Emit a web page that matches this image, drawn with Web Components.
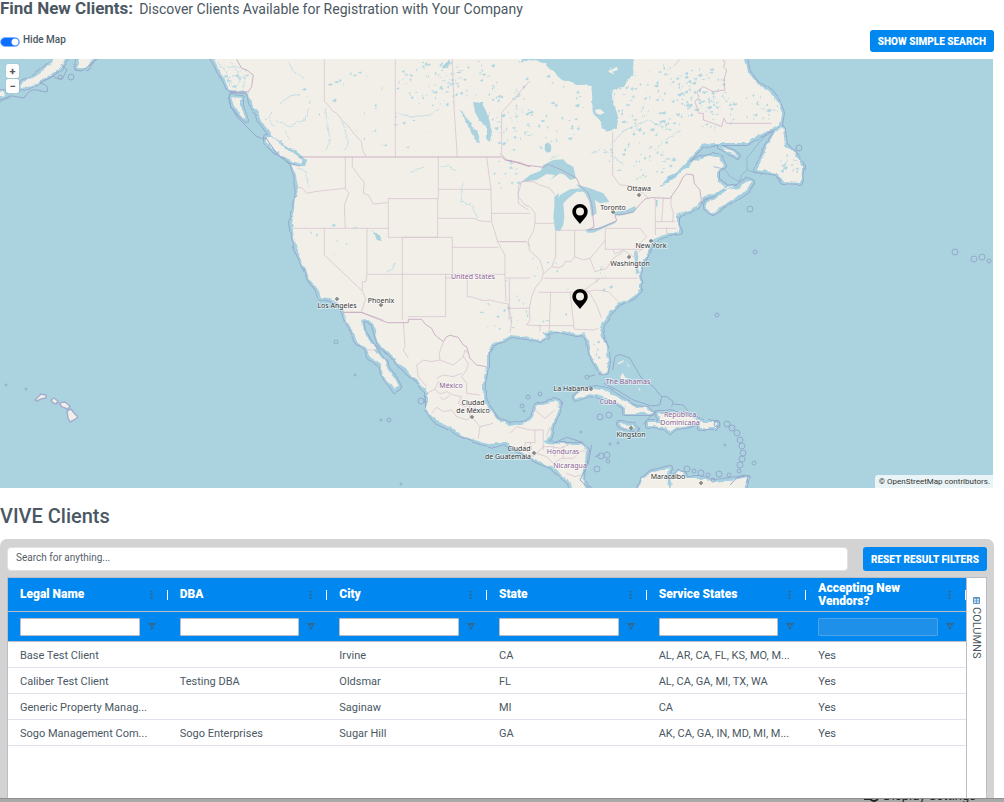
<!DOCTYPE html>
<html lang="en">
<head>
<meta charset="utf-8">
<meta name="viewport" content="width=device-width, initial-scale=1">
<title>Find New Clients</title>
<style>
  body {
    margin: 0;
    background: #fff;
    color: #4b5863;
    font-family: Roboto, "Liberation Sans", sans-serif;
    font-size: 12px;
  }
</style>
</head>
<body>
<client-page></client-page>

<template id="tpl-map">
  <style>
    :host { display: block; position: relative; background: #aad3df; }
    svg { display: block; width: 100%; height: auto; }
    text { font: 7px "Noto Sans", sans-serif; text-anchor: middle; paint-order: stroke; stroke: #fff; stroke-opacity: .6; stroke-width: 1.5px; fill: #333; }
    .country { fill: #8b5f92; }
    .zoom { position: absolute; left: 6px; top: 5px; display: grid; gap: 1px; }
    .zoom button { width: 13px; height: 14px; padding: 0; border: 0; border-radius: 2px; background: #fff; color: #555; font: bold 11px/13px Roboto, sans-serif; box-shadow: 0 0 1px #789; }
    .credit { position: absolute; right: 0; bottom: 0; padding: 1px 3px 1px 4px; background: rgba(255, 255, 255, .75); border-radius: 3px 0 0 0; color: #333; font-size: 8px; line-height: 11px; }
    .credit a { color: inherit; text-decoration: none; }
  </style>
  <svg viewBox="0 59 993 429" role="img" aria-label="Client locations">
    <defs>
      <filter id="rough" x="0" y="50" width="1000" height="450" filterUnits="userSpaceOnUse">
        <feTurbulence type="fractalNoise" baseFrequency=".12" numOctaves="3" seed="4"/>
        <feDisplacementMap in="SourceGraphic" scale="5" xChannelSelector="R" yChannelSelector="G"/>
      </filter>
      <filter id="rough-edge" x="0" y="50" width="1000" height="450" filterUnits="userSpaceOnUse">
        <feTurbulence type="fractalNoise" baseFrequency=".06" numOctaves="2" seed="4"/>
        <feDisplacementMap in="SourceGraphic" scale="4" xChannelSelector="R" yChannelSelector="G"/>
      </filter>
      <filter id="rough-line" x="0" y="50" width="1000" height="450" filterUnits="userSpaceOnUse">
        <feTurbulence type="fractalNoise" baseFrequency=".2" numOctaves="2" seed="9"/>
        <feDisplacementMap in="SourceGraphic" scale="4" xChannelSelector="R" yChannelSelector="G"/>
      </filter>
      <g id="land">
        <path d="M205 50L213 59 219 70 225 80 229 90 245 91 249 93 251 103 258 112 262 123 268 131 272 137 284 143 293 150 302 155 306 160 304 166 298 166 291 163 295 175 297 187 295 210 292 223 294 237 295 247 300 258 305 268 310 280 317 288 320 297 328 298 337 302 342 308 348 323 354 333 358 344 366 347 370 357 380 365 382 375 390 383 395 390 399 387 395 378 388 370 385 362 378 353 372 345 367 338 363 330 361 320 367 319 373 324 377 337 380 345 390 353 398 363 408 372 418 380 427 392 427 410 435 420 450 427 462 435 480 442 493 445 505 442 513 447 523 453 540 462 553 467 563 477 570 483 573 498H592L583 480 582 473 585 463 586 450 580 444 563 444 543 443 550 437 552 427 555 417 560 403 555 401 537 405 533 417 527 423 510 426 497 420 488 407 483 397 483 383 486 367 486 353 493 345 503 340 510 335 527 337 540 341 547 337 543 332 563 331 577 334 583 333 588 340 590 353 595 363 600 372 606 373 608 363 607 350 602 337 600 328 602 323 610 312 620 303 633 297 640 290 640 280 638 277 642 263 648 250 653 242 657 237 673 233 680 232 677 225 677 215 687 212 698 205 703 197 717 193 725 186 717 180 717 170 724 166 720 158 713 155 700 158 687 167 675 178 660 187 668 177 677 172 690 158 702 145 713 143 747 143 760 135 773 128 780 125 782 113 777 100 767 90 757 83 748 72 743 50Z"/>
        <path d="M266 137L275 139 285 147 295 155 302 160 300 164 290 160 280 154 272 148 266 142ZM231 97L241 98 241 106 246 121 240 115 234 106Z"/>
        <path d="M23 82L33 78 47 67 60 55H69L60 68 50 75 37 83 28 88 20 87ZM77 68L80 55H96L86 68ZM-5 98L6 96 4 92-5 92Z"/>
        <path d="M705 208L713 213 730 202 747 190 752 182 747 180 738 188 727 190 717 198 707 202ZM719 185L725 188 733 187 726 190Z"/>
        <path d="M782 128L775 132 767 145 762 160 757 170 777 173 783 182 800 183 803 167 795 153 785 145 783 130ZM720 147L733 152 738 156 730 153Z"/>
        <path d="M574 396L582 390 597 388 610 392 623 400 633 407 647 408 652 413 625 413 625 408 617 402 603 397 590 394 575 399ZM657 413L667 413 687 415 700 421 690 425 677 427 670 432 665 427 648 426 648 423 663 423 660 417ZM700 423H717L715 428H700ZM620 424L633 425 637 429 623 428Z"/>
        <path d="M636 498L642 480 650 473 670 468 667 477 670 491 672 480 678 472 683 473 685 478 700 478 713 482 738 479 747 477 742 498Z"/>
      </g>
    </defs>
    <g filter="url(#rough-edge)">
      <use href="#land" fill="none" stroke="#9aaccd" stroke-width="6" stroke-linejoin="round"/>
      <use href="#land" fill="none" stroke="#a5d0df" stroke-width="4" stroke-linejoin="round"/>
    </g>
    <use href="#land" fill="#f2efe9" filter="url(#rough)"/>
    <g filter="url(#rough)">
      <path fill="#aad3df" transform="translate(500 50) scale(.3333)" d="M60 0L66 28 90 30 135 40 170 75 215 100 275 108 278 185 300 220 320 245 350 235 355 205 340 150 338 120 370 110 400 75 400 0Z"/>
    </g>
    <g fill="#aad3df" transform="translate(500 50) scale(.3333)">
      <path d="M65 395L90 375 122 362 130 345 160 330 190 328 200 340 220 350 228 385 210 390 195 375 180 370 150 390 165 375 140 372 110 390Z"/>
      <path d="M163 440L176 430 176 445 180 435 210 418 235 415 262 425 230 425 205 445 190 460 193 500 190 525 180 543 165 540 160 500 163 470Z"/>
      <path d="M228 403L270 415 310 430 328 455 300 460 285 450 290 490 275 500 268 455 255 430Z"/>
      <path d="M256 538L290 535 350 512 345 520 320 530 280 548 262 548ZM340 485L375 482 405 468 409 478 400 488 360 497 343 494Z"/>
      <path d="M135 282L145 277 154 290 152 305 142 308 134 300ZM402 605L410 600 415 620 412 650 420 670 408 672 405 640ZM455 570L490 555 515 552 490 562 460 576ZM468 450L473 450 472 472 468 468Z"/>
      <path fill="#f2efe9" d="M285 180L300 177 314 188 300 194 288 190ZM325 65L335 48 330 62 350 50 354 60 337 65 345 74Z"/>
    </g>
    <g filter="url(#rough-line)" fill="#aad3df">
      <path d="M473 102L482 103 487 113 492 130 490 142 487 140 487 128 478 120 475 110ZM459 109L466 116 472 125 477 133 480 143 476 142 472 132 466 122ZM449 59L442 68 446 68 452 62ZM373 231L379 235 382 241 377 240ZM523 59L519 62 526 61 530 58Z"/>
    </g>
    <path id="lakes" fill="#a8d4e1" opacity=".85"/>
    <path id="rivers" filter="url(#rough-line)" fill="none" stroke="#b3d8e2" stroke-width=".7" d="M288 62L294 72 304 78M280 104L290 96 300 94M275 120L290 126 305 119 309 108M325 108L330 140 326 150M342 120L348 140 345 150M409 172L420 168 424 166M440 167L448 166 456 171M463 182L461 202 470 204 478 218M230 62L237 70 240 80 235 88M232 75L245 78 243 91M395 112L410 117 430 115 440 108M610 145L625 130 648 120 670 130M590 155L602 148 624 165M655 150L665 140 680 130M560 155L550 160M386 273L392 268 395 263M290 140L285 132M275 128L270 118M265 120L272 113M297 168L306 172 308 186M217 62L226 72 230 86M224 66L240 68"/>
    <g fill="none" stroke="#d2bccb" stroke-width="2" transform="translate(200 50) scale(.3333)">
      <path d="M373 28V155L385 165 395 180 410 190 430 215 440 222 465 255 480 270 485 275 487 298 498 320M586 28V321M757 28L763 185 772 321M990 92L905 188V310M288 410L308 415 320 430 350 424 390 420 436 415M436 321V415L447 430 433 465 436 535M280 535H565M457 321V350L475 375 493 398 490 430 505 435 520 462 562 458M565 446H713V562H565ZM715 321V446M715 418H873M715 505H820L840 513 872 515M860 321L873 418 875 515 895 580 915 615M875 490H990M890 575H980L990 590M757 592H895M607 562H757V673H607ZM501 535V673H607V810M373 535V615L487 723M501 673L498 695 487 695 487 723 497 745 485 785M432 787H485L550 810M757 673H915M915 615V684L918 755M737 673V800H625M737 684H802V740L820 742 850 752 870 750 900 758 925 762 928 810M918 684H990M990 390L965 395 955 430 955 460 985 480"/>
      <path stroke="#b993b5" d="M300 321H905L915 330 950 338 990 350M110 28L125 55 140 60 160 75 155 110 145 125 90 128"/>
    </g>
    <g fill="none" stroke="#d2bccb" stroke-width="2" transform="translate(500 50) scale(.3333)">
      <path d="M338 245V375L360 405 390 407 430 430 445 445M105 520H163M167 541H258M65 395L100 395 120 405 150 415 165 435M65 395L55 410 55 440 75 465 90 470 105 490 105 520 100 545 85 570 88 600 120 630 130 665M167 541V620L155 650M224 541V620M130 672L155 650 175 653 190 648 195 635 212 635 224 620 250 630 270 625 300 590 316 570M316 535V598H430L420 580 440 560 420 535H316M466 445V515L525 515M466 515V555M490 445L488 475 485 515M515 440L512 460 520 490 518 515M500 535V552M466 535H530M340 600L345 612 370 600 400 620 425 598M270 625L285 665 320 655 340 625 370 605M130 685H412M115 727H245L300 685M245 727L290 720 325 725 355 755M130 665L125 690 105 715 95 740 88 775 90 810 80 825 120 827 120 845M152 727L148 840M210 727L222 830M115 827H218L225 838 280 840 295 835M245 715L270 730 290 765 305 805M30 775H90M28 685V775L35 815 30 850M0 575H80M540 28L520 50"/>
      <path stroke="#c7a9c1" d="M670 28L675 40 670 50 680 60 672 90 675 120 640 125 610 110 590 125 597 140 585 155 597 190 610 190 610 210 640 220 665 230 672 205 680 220H815"/>
      <path stroke="#b993b5" d="M0 310L20 330 60 338 80 346 100 348 130 352 145 343 185 360 230 385 240 408 265 430 275 460 282 530 265 540 300 535 350 512 345 495 375 492 400 485 435 447 455 443 510 445 535 410 550 380 560 372 580 375 583 400 600 420 605 460"/>
      <path stroke="#8eabc7" d="M815 237L780 275 740 325 742 360 725 375 718 395 690 380 675 358 640 350M742 360L770 370"/>
    </g>
    <g fill="none" stroke="#d2bccb" stroke-width="2" transform="translate(280 250) scale(.3333)">
      <path d="M370 218L375 290 370 300 385 325M490 275L478 310 480 330 455 335 430 330 410 345 415 380 440 410M480 330L520 345 550 320 555 300 565 310M550 320L565 340 560 360 545 380 560 400 560 430 600 435M440 430L465 418 480 432 500 425 520 435 545 440 535 460 555 470 580 460 590 480 610 485M455 490L470 472 490 485 515 480 530 500 560 510 575 500 600 530 595 565M470 385L490 375 520 380 545 370M465 418L475 395 500 405M510 435L490 450 480 440M570 460L570 500M262 300H290M765 480L795 505 825 480M760 480L765 465M600 530L640 520M690 550L710 530 750 540H790V575M765 540V578L735 578 735 600M770 610L790 590 815 590 840 595 870 582M820 640L845 625 880 625 900 605 918 600M860 670L885 680 905 675M735 600L760 620 770 610 800 620 820 640M750 578L755 600M790 578V600M810 530L800 560M820 590L825 620M850 590V625"/>
      <path stroke="#b993b5" d="M190 187H243L322 218H385V208H425L435 222 455 235 465 255 490 275 500 260 510 256 535 262 550 285 560 290 570 325 590 345 620 350"/>
    </g>
    <g fill="none" stroke="#95a9ca" stroke-width="3" transform="translate(500 250) scale(.3333)">
      <path d="M338 360L345 320 360 313 390 325 410 360 425 385 460 410 485 440 480 465 455 468 400 450 350 420 312 400M485 440L500 440 520 455 515 470M520 462L550 465 565 485M430 523L445 505 470 485M160 580L200 562 250 578M265 380L285 375M272 720L240 690 265 640 275 585M285 620L300 615M690 705L710 684 745 676 740 700"/>
      <path fill="#f2efe9" stroke="none" d="M361 380L368 368 375 382 385 386 365 388ZM352 340L370 331 372 334 356 343ZM380 338L388 348 386 352ZM415 412L422 420 418 422Z"/>
    </g>
    <path id="rings" fill="none" stroke="#95a9ca"/>
    <g fill="none" stroke="#95a9ca">
      <path d="M0 102Q8 95 13 96T24 98Q30 88 37 90T47 92Q50 85 40 83L53 76Q62 82 63 78T67 70L61 64M74 68Q80 74 86 68L97 59M231 92Q227 98 231 107T245 125L256 136Q262 140 266 138M266 138L277 154 288 163 300 166"/>
      <path fill="#f2efe9" stroke="#a3afd0" stroke-width="1.5" stroke-linejoin="round" d="M35 400L38 397 41 394 46 395 46 398 41 399 37 401ZM51 400L54 398 58 401 56 404 53 403ZM59 403L65 402 70 406 68 409 62 407ZM67 411L71 409 74 413 78 417 74 420 70 422 68 418Z"/>
    </g>
    <g id="labels"></g>
  </svg>
  <div class="zoom"><button type="button" aria-label="Zoom in">+</button><button type="button" aria-label="Zoom out">−</button></div>
  <div class="credit">© <a href="#osm">OpenStreetMap</a> contributors.</div>
  <slot></slot>
</template>

<script>
class ActionButton extends HTMLElement {
  constructor() {
    super();
    this.attachShadow({ mode: "open" });
    this.shadowRoot.innerHTML = `
      <style>
        :host { display: inline-block; }
        button {
          height: var(--button-height, 22px);
          padding: 2px 8px 0;
          border: 0;
          border-radius: 3px;
          background: #0087f0;
          color: #fff;
          font: 900 10px/20px Roboto, sans-serif;
          white-space: nowrap;
          width: 100%;
        }
      </style>
      <button type="button"><slot></slot></button>
    `;
  }
}
customElements.define("action-button", ActionButton);

class ToggleSwitch extends HTMLElement {
  constructor() {
    super();
    this.attachShadow({ mode: "open" });
    this.shadowRoot.innerHTML = `
      <style>
        :host { display: block; font-size: 10px; font-weight: 500; line-height: 14px; }
        label { display: flex; gap: 3px; }
        input {
          appearance: none;
          width: 20px;
          height: 10px;
          margin: 4px 0 0;
          border: 1px solid #86b7fe;
          border-radius: 5px;
          background: radial-gradient(circle at 14px 4px, #fff 3px, #0d6efd 4px);
        }
      </style>
      <label><input type="checkbox" role="switch" checked><slot></slot></label>
    `;
  }
}
customElements.define("toggle-switch", ToggleSwitch);

class MapPin extends HTMLElement {
  constructor() {
    super();
    this.attachShadow({ mode: "open" });
    this.shadowRoot.innerHTML = `
      <style>
        :host { display: block; position: absolute; transform: translate(-50%, -100%); }
        svg { display: block; }
      </style>
      <svg width="16" height="20" viewBox="0 0 16 20"><path fill-rule="evenodd" d="M8 0a7.7 7.7 0 0 1 7.7 7.7C15.7 12 11 16 8 20 5 16 .3 12 .3 7.7A7.7 7.7 0 0 1 8 0zm0 3.6a4 4 0 1 0 0 8 4 4 0 0 0 0-8z"/></svg>
    `;
  }

  connectedCallback() {
    this.style.left = this.getAttribute("x") + "%";
    this.style.top = this.getAttribute("y") + "%";
  }
}
customElements.define("map-pin", MapPin);

// x, baseline y, text, is country
const LABELS = [
  [639, 191, "Ottawa"], [613, 210, "Toronto"], [651, 248, "New York"],
  [630, 266, "Washington"], [337, 308, "Los Angeles"], [381, 303, "Phoenix"],
  [571, 391, "La Habana"], [473, 405, "Ciudad"], [473, 413, "de México"],
  [519, 451, "Ciudad"], [508, 459, "de Guatemala"], [631, 437, "Kingston"],
  [668, 479, "Maracaibo"],
  [473, 279, "United States", 1], [451, 388, "México", 1], [628, 384, "The Bahamas", 1],
  [608, 404, "Cuba", 1], [680, 417, "República", 1], [680, 425, "Dominicana", 1],
  [563, 454, "Honduras", 1], [570, 468, "Nicaragua", 1],
];

const TOWNS = [[639, 195], [613, 212], [651, 241], [629, 257], [337, 299], [381, 305],
  [591, 389], [472, 417], [534, 453], [631, 428], [701, 483]];

// centre x, centre y, spread x, spread y, count
const LAKE_FIELDS = [
  [430, 85, 35, 24, 75], [475, 80, 28, 20, 25], [508, 120, 22, 32, 50], [545, 110, 38, 40, 50],
  [655, 100, 42, 38, 100], [700, 92, 26, 24, 60], [640, 155, 40, 25, 45], [715, 110, 20, 22, 40],
  [345, 95, 45, 30, 16], [385, 125, 50, 25, 14], [505, 175, 14, 16, 14], [330, 235, 30, 20, 8],
  [760, 107, 18, 16, 25], [790, 165, 12, 12, 20], [235, 76, 12, 12, 18], [540, 290, 40, 35, 16],
  [500, 315, 22, 16, 14], [607, 280, 24, 15, 10], [595, 350, 4, 12, 8],
];

// centre x, centre y, radius
const RINGS = [
  [6, 385, 1], [26, 389, 1], [336, 342, 2], [355, 375, 1], [381, 420, 1], [389, 420, 2], [421, 401, 3],
  [401, 484, 1], [750, 209, 3], [717, 315, 2], [755, 252, 2], [955, 252, 3], [974, 259, 3], [982, 257, 3],
  [989, 261, 2], [528, 397, 2], [540, 394, 2], [522, 406, 2], [524, 411, 1], [600, 417, 3], [609, 415, 3],
  [581, 432, 1], [610, 444, 1], [618, 443, 1], [601, 456, 3], [607, 455, 3], [608, 461, 2], [597, 469, 3],
  [587, 377, 2], [725, 445, 1], [754, 463, 2], [717, 424, 3], [727, 424, 3], [732, 428, 3], [737, 433, 3],
  [740, 440, 3], [742, 446, 3], [743, 453, 3], [742, 459, 3], [740, 465, 3], [739, 471, 2], [687, 469, 3],
  [694, 471, 2], [701, 473, 3], [708, 475, 2], [719, 474, 3], [729, 475, 2], [60, 77, 2], [71, 77, 3],
  [799, 148, 3], [713, 480, 2],
];

class ClientMap extends HTMLElement {
  constructor() {
    super();
    this.attachShadow({ mode: "open" });
    this.shadowRoot.append(document.getElementById("tpl-map").content.cloneNode(true));
    this.drawLakes();
    this.drawRings();
    this.drawLabels();
  }

  // fixed seed, so the lakes stay where they are between loads
  drawLakes() {
    let seed = 17;
    const rnd = () => (seed = (seed * 16807) % 2147483647) / 2147483647;
    let d = "";
    LAKE_FIELDS.forEach(([cx, cy, rx, ry, count]) => {
      for (let i = 0; i < count; i++) {
        const angle = rnd() * Math.PI * 2;
        const dist = Math.sqrt(rnd());
        const x = cx + Math.cos(angle) * dist * rx;
        const y = Math.max(60, cy + Math.sin(angle) * dist * ry);
        const w = 0.6 + rnd() * rnd() * 5;
        const h = 0.4 + rnd() * 1.6;
        d += `M${x.toFixed(1)} ${y.toFixed(1)}l${w.toFixed(1)} ${(-h).toFixed(1)} ${(w / 4).toFixed(1)} ${h.toFixed(1)} ${(-w / 2).toFixed(1)} ${h.toFixed(1)}z`;
      }
    });
    this.shadowRoot.querySelector("#lakes").setAttribute("d", d);
  }

  drawRings() {
    const d = RINGS.map(([x, y, r]) => `M${x - r} ${y}a${r} ${r} 0 1 0 ${r * 2} 0a${r} ${r} 0 1 0 ${-r * 2} 0`).join("");
    this.shadowRoot.querySelector("#rings").setAttribute("d", d);
  }

  drawLabels() {
    const towns = TOWNS.map(([x, y]) => `<circle cx="${x}" cy="${y}" r="1.3" fill="#bbb" stroke="#555" stroke-width=".8"/>`);
    const names = LABELS.map(([x, y, name, country]) => `<text x="${x}" y="${y}"${country ? ' class="country"' : ""}>${name}</text>`);
    this.shadowRoot.querySelector("#labels").innerHTML = towns.concat(names).join("");
  }
}
customElements.define("client-map", ClientMap);

const COLUMNS = ["Legal Name", "DBA", "City", "State", "Service States", "Accepting New Vendors?"];
const CLIENTS = [
  ["Base Test Client", "", "Irvine", "CA", "AL, AR, CA, FL, KS, MO, M...", "Yes"],
  ["Caliber Test Client", "Testing DBA", "Oldsmar", "FL", "AL, CA, GA, MI, TX, WA", "Yes"],
  ["Generic Property Manag...", "", "Saginaw", "MI", "CA", "Yes"],
  ["Sogo Management Com...", "Sogo Enterprises", "Sugar Hill", "GA", "AK, CA, GA, IN, MD, MI, M...", "Yes"],
];

class ClientGrid extends HTMLElement {
  constructor() {
    super();
    this.attachShadow({ mode: "open" });
    this.shadowRoot.innerHTML = `
      <style>
        :host { display: flex; border: 1px solid #babfc7; border-bottom: 0; background: #fff; }
        .main { flex: 1; min-width: 0; }
        table { width: 100%; table-layout: fixed; border-collapse: collapse; }
        th, td { padding: 0 0 0 12px; text-align: left; white-space: nowrap; }
        thead { background: #0087f0; }
        th { border-bottom: 1px solid #babfc7; }
        .cell { display: flex; align-items: center; }
        .names .cell { height: 33px; }
        .filters .cell { height: 29px; }
        .name { flex: 1; color: #fff; font-size: 12px; font-weight: 900; line-height: 13px; white-space: normal; }
        .cell svg { display: block; }
        .menu { width: 5px; margin-right: 13px; }
        .bar { width: 1px; height: 10px; background: #fff; }
        input { flex: 1; min-width: 0; box-sizing: border-box; height: 18px; padding: 0 4px; border: 1px solid #babfc7; border-radius: 1px; background: #fff; font: inherit; }
        input:disabled { background: #1f90ea; border-color: #4ba3ea; }
        .funnel { margin: 0 12px 0 8px; }
        button { padding: 0; border: 0; background: none; color: inherit; font: inherit; }
        td { height: 24px; padding-top: 1px; border-bottom: 1px solid #dde2eb; font-size: 11px; overflow: hidden; text-overflow: ellipsis; }
        .side { width: 19px; border-left: 1px solid #babfc7; }
        .side button { display: flex; align-items: center; gap: 3px; width: 19px; padding-top: 19px; writing-mode: vertical-rl; font-size: 11px; line-height: 19px; }
      </style>
      <div class="main">
        <table>
          <thead>
            <tr class="names">${COLUMNS.map((name) => this.headCell(name)).join("")}</tr>
            <tr class="filters">${COLUMNS.map((name, i) => this.filterCell(name, i === 5)).join("")}</tr>
          </thead>
          <tbody>
            ${CLIENTS.map((row) => `<tr>${row.map((text) => `<td>${text}</td>`).join("")}</tr>`).join("")}
          </tbody>
        </table>
      </div>
      <div class="side">
        <button type="button">
          <svg width="7" height="7" viewBox="0 0 7 7"><path fill="#cfe4f7" stroke="#3c7fb5" stroke-width=".8" d="M.5.5h6v6h-6z"/><path stroke="#3c7fb5" stroke-width=".6" d="M.5 1.5h6M.5 4h6M3.5 1v5.500"/></svg>
          <span>COLUMNS</span>
        </button>
      </div>
    `;
  }

  headCell(name) {
    return `<th scope="col"><div class="cell">
      <span class="name">${name}</span>
      <button type="button" class="menu" aria-label="${name} menu"><svg width="5" height="9" viewBox="0 0 5 9" fill="#44606f"><path d="M1.500 1h2v1.500h-2zM1.500 4h2v1.500h-2zM1.500 7h2v1.500h-2z"/></svg></button>
      <span class="bar"></span>
    </div></th>`;
  }

  filterCell(name, disabled) {
    return `<th><div class="cell">
      <input type="text" aria-label="${name} filter"${disabled ? " disabled" : ""}>
      <button type="button" class="funnel" aria-label="${name} filter options"><svg width="8" height="7" viewBox="0 0 8 7" fill="none" stroke="#44606f" stroke-width=".8"><path d="M.7.5h6.600L4.800 3.700V5.300L3.300 6.400V3.700zM1.500 1.500h5"/></svg></button>
    </div></th>`;
  }
}
customElements.define("client-grid", ClientGrid);

class ClientPage extends HTMLElement {
  constructor() {
    super();
    this.attachShadow({ mode: "open" });
    this.shadowRoot.innerHTML = `
      <style>
        :host { display: flex; flex-direction: column; height: 100vh; overflow: hidden; }
        main { flex: 1; min-height: 0; overflow: hidden; display: flex; flex-direction: column; padding-right: 10px; }
        h1 { display: flex; align-items: baseline; gap: 6px; margin: 0; font-size: 17px; font-weight: 700; line-height: 17px; }
        h1 small { font-size: 14px; font-weight: 400; }
        .tools { display: flex; justify-content: space-between; align-items: flex-start; padding: 12px 0 7px; }
        .tools toggle-switch { margin-top: 3px; }
        client-map { flex: none; margin-right: 1px; }
        h2 { margin: 16px 0 10px; font-size: 20px; font-weight: 500; line-height: 25px; }
        .panel { flex: 1; display: flex; flex-direction: column; gap: 6px; padding: 8px 7px 0; border-radius: 7px 7px 0 0; background: #d3d3d3; }
        .search { display: flex; gap: 15px; }
        .search input { flex: 1; min-width: 0; box-sizing: border-box; height: 24px; padding: 0 8px 3px; border: 1px solid #dee2e6; border-radius: 4px; color: inherit; font: 10px Roboto, sans-serif; }
        .search input::placeholder { color: #56606a; }
        .search action-button { --button-height: 24px; }
        client-grid { flex: 1; }
        footer { flex: none; height: 3px; border-top: 1px solid #8f8f8f; background: #a9a9a9; overflow: hidden; display: flex; justify-content: flex-end; align-items: flex-end; padding-right: 28px; }
        footer a { display: flex; align-items: center; gap: 4px; height: 12px; color: #222; font-size: 13px; line-height: 12px; text-decoration: none; }
      </style>
      <main>
        <h1>Find New Clients: <small>Discover Clients Available for Registration with Your Company</small></h1>
        <div class="tools">
          <toggle-switch>Hide Map</toggle-switch>
          <action-button>SHOW SIMPLE SEARCH</action-button>
        </div>
        <client-map>
          <map-pin x="58.4" y="38.5"></map-pin>
          <map-pin x="58.4" y="58.3"></map-pin>
        </client-map>
        <h2>VIVE Clients</h2>
        <div class="panel">
          <div class="search">
            <input type="search" aria-label="Search for anything" placeholder="Search for anything...">
            <action-button>RESET RESULT FILTERS</action-button>
          </div>
          <client-grid></client-grid>
        </div>
      </main>
      <footer>
        <a href="#display"><svg width="15" height="12" viewBox="0 0 15 12" fill="none" stroke="#222" stroke-width="2"><path d="M0 9h6"/><circle cx="10" cy="7" r="4"/></svg>Display Settings</a>
      </footer>
    `;
  }
}
customElements.define("client-page", ClientPage);
</script>
</body>
</html>
